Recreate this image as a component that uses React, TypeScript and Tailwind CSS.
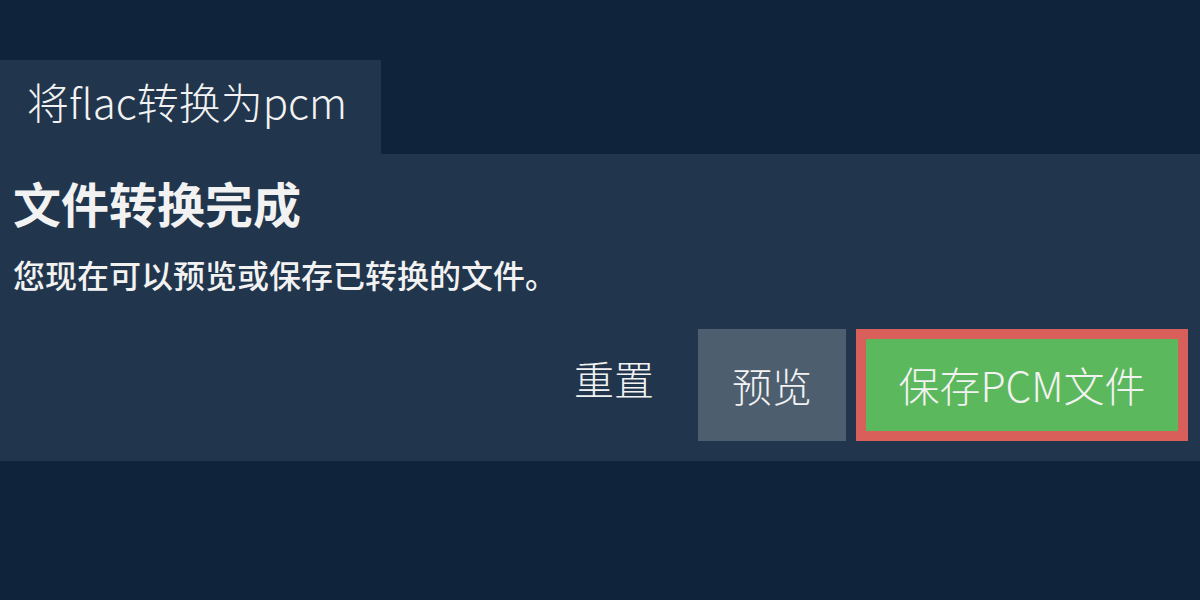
export default function App() {
  const font = { fontFamily: '"Noto Sans CJK SC", "Noto Sans", sans-serif' };

  return (
    <div className="min-h-[600px] w-full bg-[#0f243a] pt-[60px] text-[#f2f2f2]" style={font}>
      <div className="flex h-[94px] w-[381px] items-center bg-[#21364d] pb-[14px] pl-[27px] text-[42px] font-light">
        将flac转换为pcm
      </div>

      <div className="bg-[#21364d] pb-[20px] pl-[13px] pr-[12px] pt-[18px]">
        <h1 className="text-[48px] font-bold leading-[60px]">文件转换完成</h1>
        <p className="mt-[22px] text-[32px] font-medium leading-[40px]">您现在可以预览或保存已转换的文件。</p>

        <div className="mt-[35px] flex justify-end gap-[10px]">
          <button className="h-[98px] w-[148px] text-[40px] font-light">重置</button>
          <button className="h-[112px] w-[148px] bg-[#4d5e6f] text-[40px] font-light">预览</button>
          <button className="h-[112px] w-[332px] border-[10px] border-[#d9605a] bg-[#5cb85c] text-[41px] font-light">
            保存PCM文件
          </button>
        </div>
      </div>
    </div>
  );
}
